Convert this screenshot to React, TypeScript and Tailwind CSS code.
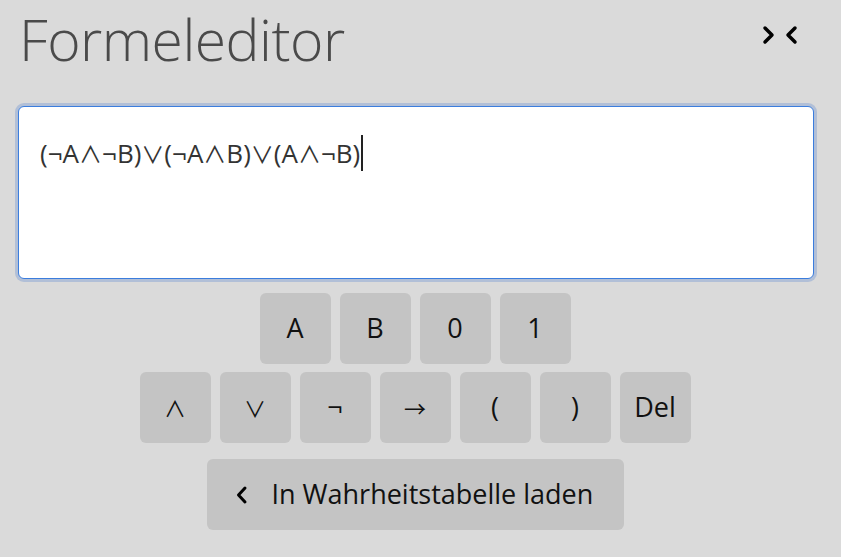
import React from "react";

const keyCls =
  "w-[71px] h-[71px] rounded-[6px] bg-[#c4c4c4] flex items-center justify-center text-[27px] text-[#111]";

const baseFont = { fontFamily: '"Open Sans", "DejaVu Sans", sans-serif' };
const symFont = { fontFamily: '"Noto Sans CJK JP", "DejaVu Sans", sans-serif' };

function FormulaText({ text }: { text: string }) {
  return (
    <>
      {Array.from(text).map((c, i) =>
        c === "∧" || c === "∨" ? (
          <span key={i} style={symFont} className="font-normal text-[23px]">
            {c}
          </span>
        ) : (
          <span key={i}>{c}</span>
        )
      )}
    </>
  );
}

function KeyLabel({ k }: { k: string }) {
  if (k === "∧" || k === "∨" || k === "→") {
    return (
      <span style={symFont} className="font-normal text-[22px]">
        {k}
      </span>
    );
  }
  return <span>{k}</span>;
}

export default function App() {
  const row1 = ["A", "B", "0", "1"];
  const row2 = ["∧", "∨", "¬", "→", "(", ")", "Del"];
  return (
    <div
      className="w-[841px] h-[557px] bg-[#dadada] overflow-hidden pl-[18px] pr-[27px]"
      style={baseFont}
    >
      <div className="flex items-center justify-between h-[80px]">
        <h1 className="text-[57px] font-light text-[#4a4a4a] leading-none pl-[1px] -mt-[2px] tracking-[-0.5px]">
          Formeleditor
        </h1>
        <svg width="36" height="20" viewBox="0 0 36 20" className="mr-[16px] -mt-[10px]">
          <path d="M3 3 L10 10 L3 17" fill="none" stroke="#000" strokeWidth="3.5" strokeLinecap="round" strokeLinejoin="round" />
          <path d="M33 3 L26 10 L33 17" fill="none" stroke="#000" strokeWidth="3.5" strokeLinecap="round" strokeLinejoin="round" />
        </svg>
      </div>
      <div className="mt-[26px] h-[173px] bg-white rounded-[6px] border border-[#3b7ddd] shadow-[0_0_0_3px_rgba(100,140,210,0.35)] px-[21px] pt-[28px]">
        <div className="text-[26px] text-[#333] leading-[30px] flex items-center">
          <span>
            <FormulaText text="(¬A∧¬B)∨(¬A∧B)∨(A∧¬B)" />
          </span>
          <span className="inline-block w-[2px] h-[36px] bg-[#222] ml-[1px]" />
        </div>
      </div>
      <div className="flex flex-col items-center mt-[14px] gap-[8px]">
        <div className="flex gap-[9px] -ml-[2px]">
          {row1.map((k) => (
            <div key={k} className={keyCls}>
              {k}
            </div>
          ))}
        </div>
        <div className="flex gap-[9px] -ml-[2px]">
          {row2.map((k) => (
            <div key={k} className={keyCls}>
              <KeyLabel k={k} />
            </div>
          ))}
        </div>
        <div className="mt-[8px] w-[417px] h-[71px] rounded-[6px] bg-[#c4c4c4] flex items-center pl-[28px] text-[27px] text-[#111] -ml-[2px]">
          <svg width="14" height="20" viewBox="0 0 14 20" className="mr-[23px]">
            <path d="M10 3 L3.5 10 L10 17" fill="none" stroke="#000" strokeWidth="3" strokeLinecap="round" strokeLinejoin="round" />
          </svg>
          <span>In Wahrheitstabelle laden</span>
        </div>
      </div>
    </div>
  );
}
